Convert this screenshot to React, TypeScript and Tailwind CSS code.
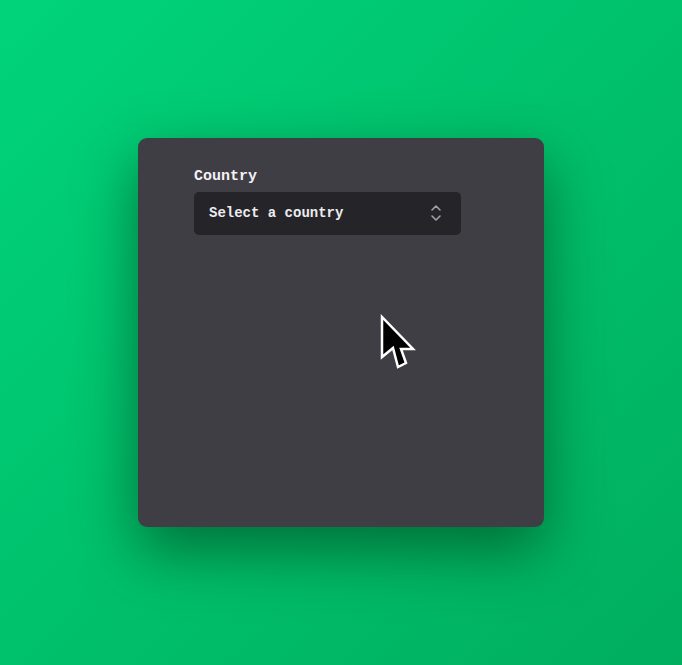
export default function App() {
  return (
    <div className="flex h-screen w-full items-center justify-center bg-gradient-to-br from-[#00d47b] to-[#00ae5e]">
      {/* Card */}
      <div className="relative h-[389px] w-[406px] rounded-[9px] bg-[#3f3e44] px-[56px] pt-[28px] shadow-[0_24px_60px_rgba(0,70,30,0.65)]">
        <label className="mb-[3px] block font-['Liberation_Mono',monospace] text-[15px] font-bold text-[#f2f2f4]">
          Country
        </label>
        <button className="flex h-[43px] w-[267px] items-center justify-between rounded-[5px] bg-[#252429] pl-[15px] pr-[19px] font-['Liberation_Mono',monospace] text-[14px] font-bold text-[#ececef]">
          <span>Select a country</span>
          {/* up/down chevrons */}
          <svg width="12" height="18" viewBox="0 0 12 18" fill="none" stroke="#a2a1a9" strokeWidth="1.6" strokeLinecap="round" strokeLinejoin="round">
            <path d="M2 6 L6 2 L10 6" />
            <path d="M2 12 L6 16 L10 12" />
          </svg>
        </button>

        {/* Mouse pointer */}
        <svg
          className="absolute left-[241px] top-[176px]"
          width="38"
          height="58"
          viewBox="-2 -2 38 58"
        >
          <path
            d="M1 1 L1 41 L12 32 L17 51 L25 47 L20 33 L32 33 Z"
            fill="#000"
            stroke="#fff"
            strokeWidth="2.5"
            strokeLinejoin="miter"
          />
        </svg>
      </div>
    </div>
  );
}
